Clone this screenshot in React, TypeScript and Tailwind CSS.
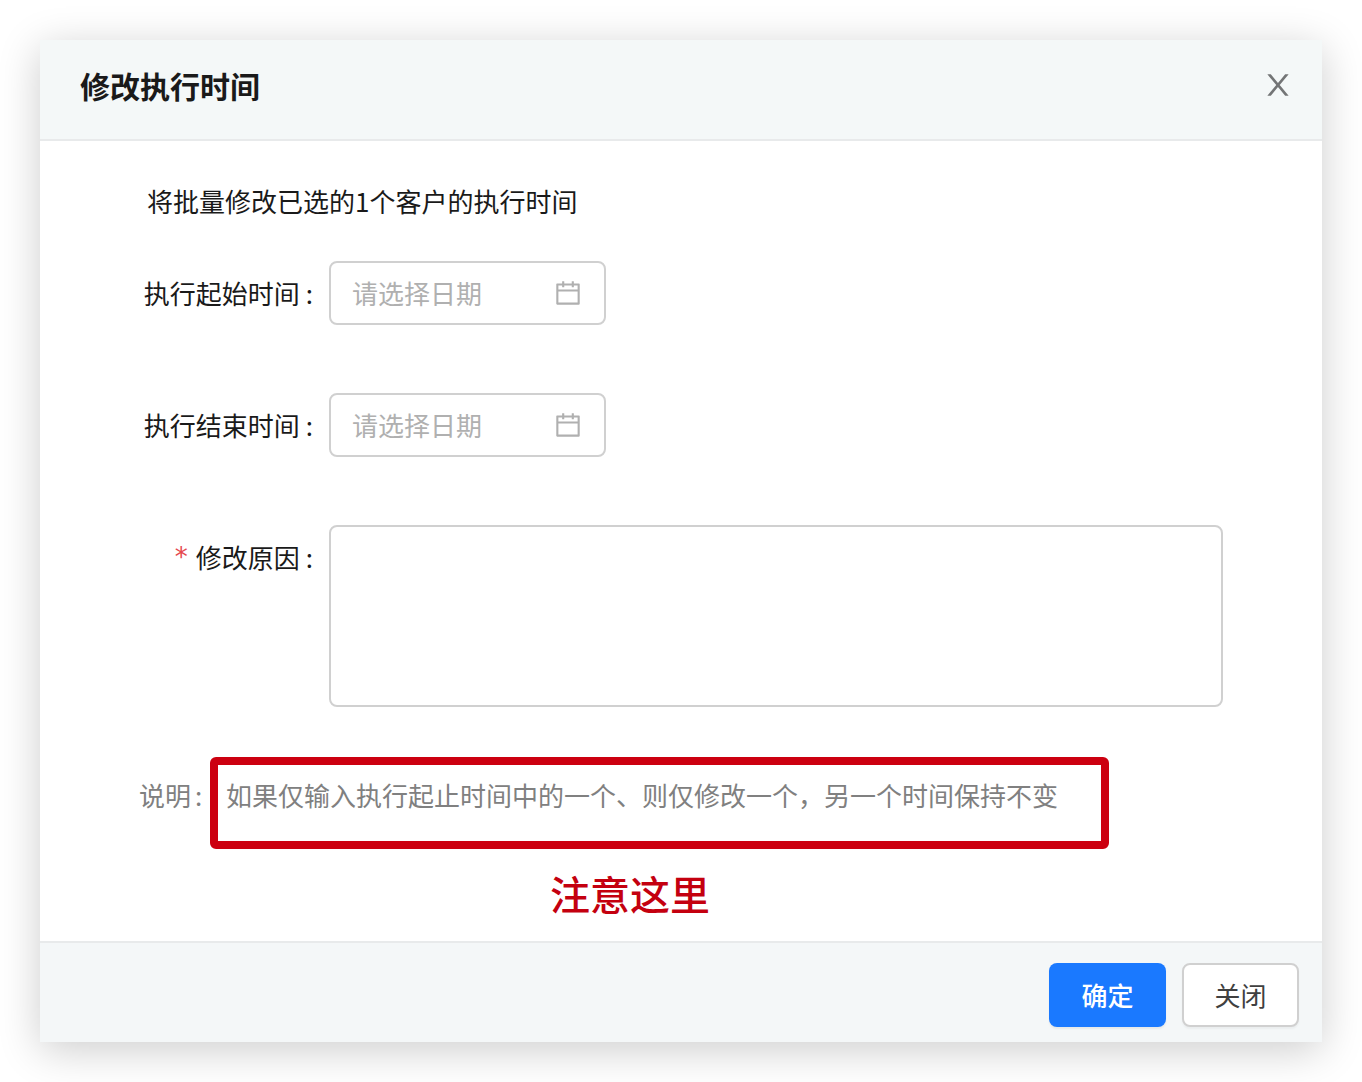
import type { ReactNode } from "react"

function CloseIcon() {
  return (
    <svg viewBox="0 0 1024 1024" className="size-[34px]" fill="currentColor" aria-hidden="true">
      <path d="M563.8 512l262.5-312.9c4.4-5.2.7-13.1-6.1-13.1h-79.8c-4.7 0-9.2 2.1-12.3 5.7L511.6 449.8 295.1 191.7c-3-3.6-7.5-5.7-12.3-5.7H203c-6.8 0-10.5 7.9-6.1 13.1L459.4 512 196.9 824.9A7.95 7.95 0 0 0 203 838h79.8c4.7 0 9.2-2.1 12.3-5.7l216.5-258.1 216.5 258.1c3 3.6 7.5 5.7 12.3 5.7h79.8c6.8 0 10.5-7.9 6.1-13.1L563.8 512z" />
    </svg>
  )
}

function CalendarIcon() {
  return (
    <svg viewBox="0 0 1024 1024" className="size-[30px] shrink-0" fill="currentColor" aria-hidden="true">
      <path d="M880 184H712v-64c0-4.4-3.6-8-8-8h-56c-4.4 0-8 3.6-8 8v64H384v-64c0-4.4-3.6-8-8-8h-56c-4.4 0-8 3.6-8 8v64H144c-17.7 0-32 14.3-32 32v664c0 17.7 14.3 32 32 32h736c17.7 0 32-14.3 32-32V216c0-17.7-14.3-32-32-32zm-40 656H184V460h656v380zM184 392V256h128v48c0 4.4 3.6 8 8 8h56c4.4 0 8-3.6 8-8v-48h256v48c0 4.4 3.6 8 8 8h56c4.4 0 8-3.6 8-8v-48h128v136H184z" />
    </svg>
  )
}

type FieldProps = {
  id: string
  label: string
  required?: boolean
  children: ReactNode
}

function Field({ id, label, required, children }: FieldProps) {
  return (
    <div className="flex items-start">
      <label htmlFor={id} className="flex h-16 w-[190px] shrink-0 items-center justify-end">
        {required && <span className="mr-2 font-['DejaVu_Sans',sans-serif] text-[#e5484d]">*</span>}
        {label}
        <span className="ml-1.5 mr-4">:</span>
      </label>
      {children}
    </div>
  )
}

function DateInput({ id }: { id: string }) {
  return (
    <div className="flex h-16 w-[277px] items-center rounded-lg border-2 border-[#d0d0d0] bg-white px-[21px] text-[#b0b0b0]">
      <input
        id={id}
        type="text"
        placeholder="请选择日期"
        className="w-full min-w-0 text-[#1f1f1f] outline-none placeholder:text-[#b0b0b0]"
      />
      <CalendarIcon />
    </div>
  )
}

export default function App() {
  return (
    <div className="min-h-screen bg-white p-10 font-['Noto_Sans_CJK_SC','Noto_Sans',sans-serif] text-[26px] leading-10 text-[#1a1a1a]">
      <div
        role="dialog"
        aria-labelledby="dialog-title"
        className="bg-white shadow-[0_8px_40px_rgba(0,0,0,0.2)]"
      >
        <header className="flex items-center justify-between border-b-2 border-[#e8eaeb] bg-[#f4f8f8] pt-[25px] pr-[27px] pb-[34px] pl-10">
          <h1 id="dialog-title" className="text-[30px] leading-10 font-bold">
            修改执行时间
          </h1>
          <button type="button" aria-label="关闭对话框" className="text-[#737576]">
            <CloseIcon />
          </button>
        </header>

        <form id="time-form" className="px-[99px] pt-10 pb-[22px]">
          <p className="pl-2">将批量修改已选的1个客户的执行时间</p>

          <div className="mt-10 flex flex-col gap-[68px]">
            <Field id="start-date" label="执行起始时间">
              <DateInput id="start-date" />
            </Field>
            <Field id="end-date" label="执行结束时间">
              <DateInput id="end-date" />
            </Field>
            <Field id="reason" label="修改原因" required>
              <textarea
                id="reason"
                className="h-[182px] min-w-0 flex-1 resize-none rounded-lg border-2 border-[#d0d0d0] bg-white px-[21px] py-2 outline-none"
              />
            </Field>
          </div>

          <div className="mt-[50px] flex items-start text-[#808080]">
            <span className="w-[71px] shrink-0 pt-[18px]">
              说明<span className="ml-1">:</span>
            </span>
            <p className="mr-[114px] flex-1 rounded-md border-8 border-[#cc0010] px-2 pt-2.5 pb-[26px]">
              如果仅输入执行起止时间中的一个、则仅修改一个，另一个时间保持不变
            </p>
          </div>

          <p className="mt-[18px] pl-[411px] text-[40px] leading-[52px] font-medium text-[#c4000f]">
            注意这里
          </p>
        </form>

        <footer className="flex justify-end gap-4 border-t-2 border-[#e8eaeb] bg-[#f4f7f8] pt-5 pr-[23px] pb-[15px]">
          <button
            type="submit"
            form="time-form"
            className="h-16 w-[117px] rounded-lg bg-[#1a79ff] font-medium text-white shadow-[0_2px_2px_rgba(0,0,0,0.06)]"
          >
            确定
          </button>
          <button
            type="button"
            className="h-16 w-[117px] rounded-lg border-2 border-[#d0d0d0] bg-white text-[#404040] shadow-[0_2px_2px_rgba(0,0,0,0.04)]"
          >
            关闭
          </button>
        </footer>
      </div>
    </div>
  )
}
